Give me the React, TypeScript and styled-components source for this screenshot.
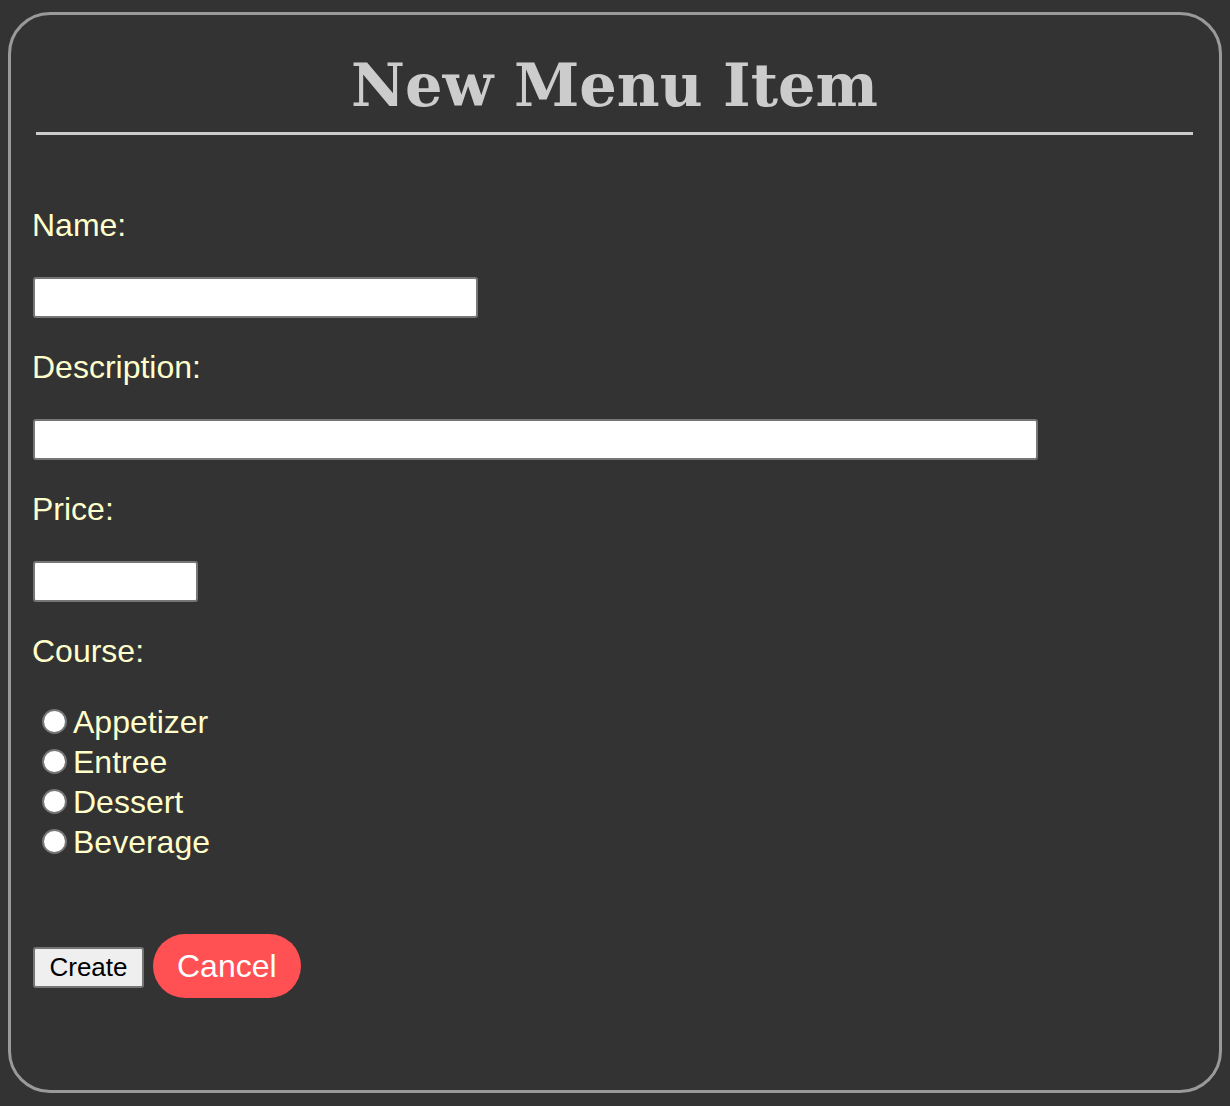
import React from 'react';
import styled, { createGlobalStyle } from 'styled-components';

const GlobalStyle = createGlobalStyle`
  body {
    margin: 8px;
    background-color: #333333;
  }
`;

const courses = ['Appetizer', 'Entree', 'Dessert', 'Beverage'];

const App = () => {
  return (
    <>
      <GlobalStyle />
      <Card>
        <Title>New Menu Item</Title>
        <Form onSubmit={(e) => e.preventDefault()}>
          <Field>
            <Label htmlFor="name">Name:</Label>
            <Input id="name" type="text" $width={445} />
          </Field>
          <Field>
            <Label htmlFor="description">Description:</Label>
            <Input id="description" type="text" $width={1005} />
          </Field>
          <Field>
            <Label htmlFor="price">Price:</Label>
            <Input id="price" type="text" $width={165} />
          </Field>
          <Field>
            <Label as="p">Course:</Label>
            <RadioList>
              {courses.map((course) => (
                <RadioRow key={course}>
                  <Radio type="radio" name="course" value={course} />
                  {course}
                </RadioRow>
              ))}
            </RadioList>
          </Field>
          <Actions>
            <CreateButton type="submit">Create</CreateButton>
            <CancelButton type="button">Cancel</CancelButton>
          </Actions>
        </Form>
      </Card>
    </>
  );
};

const Card = styled.div`
  margin: 4px 0;
  height: 1081px;
  box-sizing: border-box;
  border: 3px solid #9a9a9a;
  border-radius: 42px;
  background-color: #333333;
  padding: 0 26px 0 25px;
`;

const Title = styled.h1`
  margin: 0;
  padding-top: 31px;
  padding-bottom: 6px;
  text-align: center;
  font-family: 'DejaVu Serif', 'Liberation Serif', serif;
  font-weight: bold;
  font-size: 59px;
  line-height: 80px;
  color: #cccccc;
  border-bottom: 3px solid #cccccc;
`;

const Form = styled.form`
  margin: 0 -5px 0 -4px;
  padding-top: 70px;
  font-family: 'Liberation Sans', Arial, sans-serif;
  font-size: 32px;
  color: #ffffcc;
`;

const Field = styled.div`
  margin-bottom: 29px;
`;

const Label = styled.label`
  display: block;
  margin: 0 0 32px;
  line-height: 40px;
  color: #ffffcc;
`;

const Input = styled.input<{ $width: number }>`
  display: block;
  box-sizing: border-box;
  margin: 0 0 0 1px;
  width: ${({ $width }) => $width}px;
  height: 41px;
  border: 2px solid #767676;
  border-radius: 3px;
  background-color: #ffffff;
  font-size: 20px;
`;

const RadioList = styled.div`
  display: flex;
  flex-direction: column;
  padding-left: 10px;
  margin-top: -1px;
`;

const RadioRow = styled.label`
  display: flex;
  align-items: center;
  gap: 6px;
  height: 40px;
  line-height: 40px;
`;

const Radio = styled.input`
  appearance: none;
  box-sizing: border-box;
  margin: 0 0 2px;
  width: 25px;
  height: 25px;
  border: 2px solid #767676;
  border-radius: 50%;
  background-color: #ffffff;

  &:checked {
    background: radial-gradient(circle, #0a66d8 45%, #ffffff 50%);
  }
`;

const Actions = styled.div`
  display: flex;
  align-items: center;
  gap: 9px;
  margin-top: 72px;
  padding-left: 1px;
`;

const CreateButton = styled.button`
  box-sizing: border-box;
  width: 111px;
  height: 41px;
  margin-top: 3px;
  border: 2px solid #767676;
  border-radius: 3px;
  background-color: #efefef;
  font-family: 'Liberation Sans', Arial, sans-serif;
  font-size: 26px;
  color: #000000;
  padding: 0;
`;

const CancelButton = styled.button`
  box-sizing: border-box;
  height: 64px;
  padding: 0 24px;
  border: none;
  border-radius: 32px;
  background-color: #ff5053;
  font-family: 'Liberation Sans', Arial, sans-serif;
  font-size: 32px;
  color: #ffffff;
`;

export default App;
